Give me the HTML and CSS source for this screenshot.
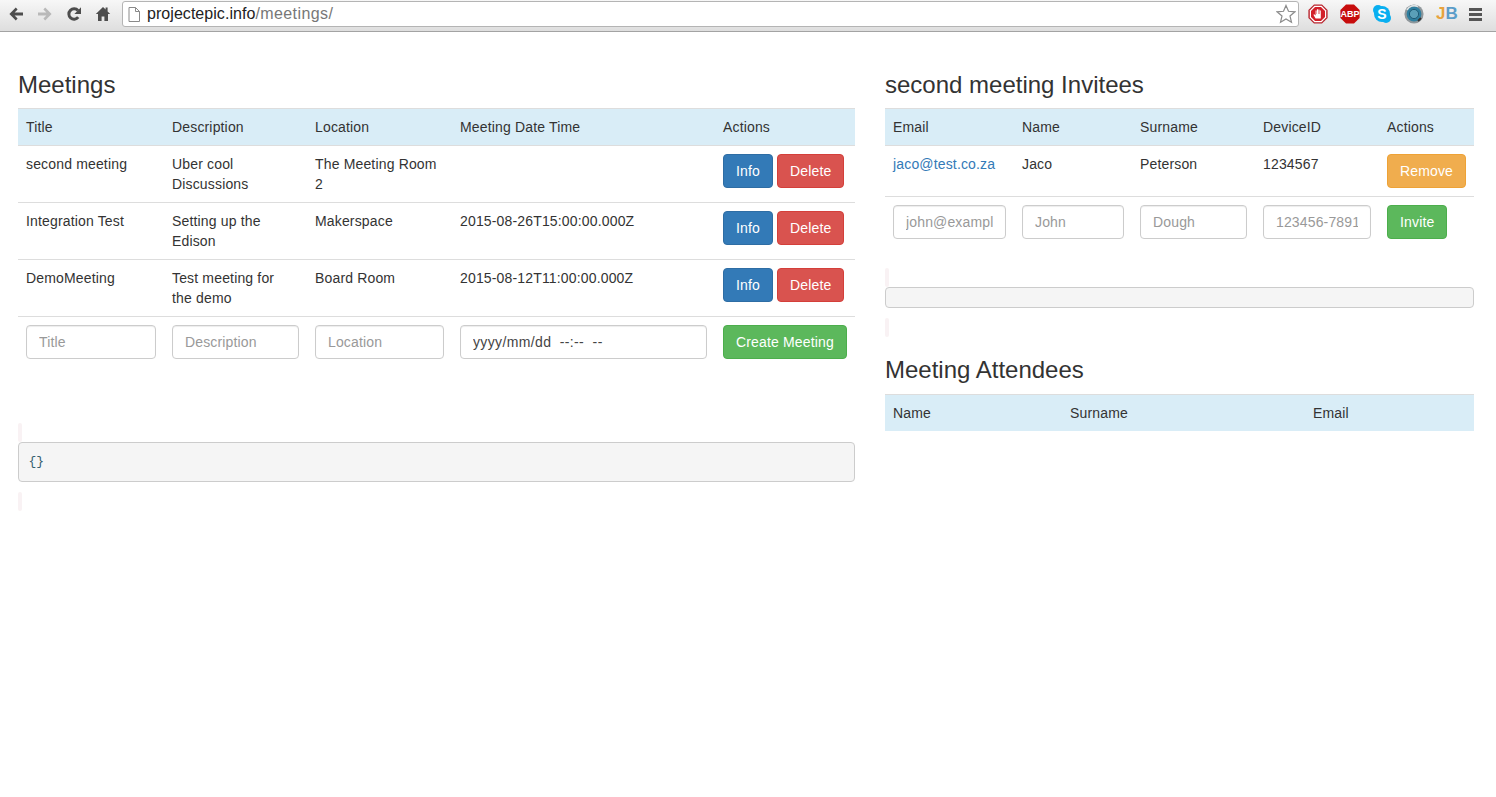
FILE: index.html
```html
<!DOCTYPE html>
<html lang="en">
<head>
    <meta charset="UTF-8">
    <meta name="viewport" content="width=device-width, initial-scale=1.0">
    <title>Meetings</title>
    <link rel="stylesheet" href="styles.css">
</head>
<body>
    <!-- browser toolbar -->
    <div class="toolbar">
        <div class="nav-icons">
            <svg class="nav-icon" viewBox="0 0 18 18"><path d="M16 7.4H7.6L10.6 4.4 8.8 2.6 2.4 9 8.8 15.4 10.6 13.6 7.6 10.6H16z" fill="#4d4d4d"/></svg>
            <svg class="nav-icon" viewBox="0 0 18 18"><path d="M2 7.4H10.4L7.4 4.4 9.2 2.6 15.6 9 9.2 15.4 7.4 13.6 10.4 10.6H2z" fill="#b9b9b9"/></svg>
            <svg class="nav-icon" viewBox="0 0 18 18"><path d="M13.2 12.2A5.2 5.2 0 1 1 13 5.6" fill="none" stroke="#4d4d4d" stroke-width="3"/><path d="M16 2.2V9H9.4z" fill="#4d4d4d"/></svg>
            <svg class="nav-icon" viewBox="0 0 18 18"><path d="M9 2L1.8 9H4V16H7.6V11.4H10.4V16H14V9H16.2L13.6 6.5V2.6H11.6V4.6z" fill="#4d4d4d"/></svg>
        </div>
        <div class="address-bar">
            <svg class="page-icon" viewBox="0 0 12 15"><path d="M1 .5H7.5L11.5 4.5V14.5H1zM7.5 .5V4.5H11.5" fill="#fff" stroke="#8a8a8a"/></svg>
            <span class="host">projectepic.info</span><span class="path">/meetings/</span>
            <svg class="star-icon" viewBox="0 0 20 20"><path d="M10 1.4L12.5 7.3 18.9 7.8 14 12 15.5 18.3 10 15 4.5 18.3 6 12 1.1 7.8 7.5 7.3z" fill="#fff" stroke="#8c8c8c" stroke-width="1.2"/></svg>
        </div>
        <div class="ext-icons">
            <svg class="ext-icon" viewBox="0 0 20 20"><path d="M6 .4H14L19.6 6V14L14 19.6H6L.4 14V6z" fill="#b8222b"/><path d="M6.4 1.8H13.6L18.2 6.4V13.6L13.6 18.2H6.4L1.8 13.6V6.4z" fill="#fff"/><path d="M7 3H13L17 7V13L13 17H7L3 13V7z" fill="#d3202a"/><path d="M7.6 14.6L5.4 10.8 6.2 10.2 7.6 11.4V6.6H8.5V10H8.9V5.2H10V10H10.4V5.4H11.4V10H11.8V6.4H12.8V14.6z" fill="#fff"/></svg>
            <svg class="ext-icon" viewBox="0 0 20 20"><path d="M6 .4H14L19.6 6V14L14 19.6H6L.4 14V6z" fill="#c70d0d"/><text x="10" y="13.4" class="abp-text">ABP</text></svg>
            <svg class="ext-icon" viewBox="0 0 20 20"><circle cx="6" cy="6" r="5" fill="#0aaff0"/><circle cx="14" cy="14" r="5" fill="#0aaff0"/><circle cx="10" cy="10" r="8" fill="#0aaff0"/><text x="10" y="15" class="skype-text">S</text></svg>
            <svg class="ext-icon" viewBox="0 0 20 20"><circle cx="10" cy="10" r="9.6" fill="#8f979b"/><circle cx="10" cy="10" r="7.4" fill="#2f7f9f"/><circle cx="10" cy="10" r="4.6" fill="#5a9fb8" stroke="#1f5a75"/><path d="M3 6A8 8 0 0 1 14 2.6" fill="none" stroke="#dfe5e7" stroke-width="1.6"/><path d="M14 17L17 14" stroke="#333" stroke-width="2"/></svg>
            <div class="jb-icon"><span class="jb-j">J</span><span class="jb-b">B</span></div>
            <div class="menu-icon"><span></span><span></span><span></span></div>
        </div>
    </div>

    <div class="page">
        <div class="left-col">
            <h2>Meetings</h2>
            <table class="data-table">
                <colgroup>
                    <col class="m-title"><col class="m-desc"><col class="m-loc"><col class="m-date"><col>
                </colgroup>
                <thead>
                    <tr class="head-row">
                        <th>Title</th>
                        <th>Description</th>
                        <th>Location</th>
                        <th>Meeting Date Time</th>
                        <th>Actions</th>
                    </tr>
                </thead>
                <tbody>
                    <tr>
                        <td>second meeting</td>
                        <td>Uber cool Discussions</td>
                        <td>The Meeting Room 2</td>
                        <td></td>
                        <td><button class="btn btn-primary">Info</button> <button class="btn btn-danger">Delete</button></td>
                    </tr>
                    <tr>
                        <td>Integration Test</td>
                        <td>Setting up the Edison</td>
                        <td>Makerspace</td>
                        <td>2015-08-26T15:00:00.000Z</td>
                        <td><button class="btn btn-primary">Info</button> <button class="btn btn-danger">Delete</button></td>
                    </tr>
                    <tr>
                        <td>DemoMeeting</td>
                        <td>Test meeting for<br>the demo</td>
                        <td>Board Room</td>
                        <td>2015-08-12T11:00:00.000Z</td>
                        <td><button class="btn btn-primary">Info</button> <button class="btn btn-danger">Delete</button></td>
                    </tr>
                    <tr>
                        <td><input class="form-control" type="text" placeholder="Title"></td>
                        <td><input class="form-control" type="text" placeholder="Description"></td>
                        <td><input class="form-control" type="text" placeholder="Location"></td>
                        <td><input class="form-control date-input" type="text" value="yyyy/mm/dd  --:--  --"></td>
                        <td><button class="btn btn-success">Create Meeting</button></td>
                    </tr>
                </tbody>
            </table>
            <div class="spacer"></div>
            <code class="stripe"></code>
            <pre>{}</pre>
            <code class="stripe"></code>
        </div>

        <div class="right-col">
            <h2>second meeting Invitees</h2>
            <table class="data-table invitees-table">
                <colgroup>
                    <col class="i-email"><col class="i-name"><col class="i-surname"><col class="i-device"><col>
                </colgroup>
                <thead>
                    <tr class="head-row">
                        <th>Email</th>
                        <th>Name</th>
                        <th>Surname</th>
                        <th>DeviceID</th>
                        <th>Actions</th>
                    </tr>
                </thead>
                <tbody>
                    <tr>
                        <td><a href="#">jaco@test.co.za</a></td>
                        <td>Jaco</td>
                        <td>Peterson</td>
                        <td>1234567</td>
                        <td><button class="btn btn-warning">Remove</button></td>
                    </tr>
                    <tr>
                        <td><input class="form-control" type="text" placeholder="john@example.com"></td>
                        <td><input class="form-control" type="text" placeholder="John"></td>
                        <td><input class="form-control" type="text" placeholder="Dough"></td>
                        <td><input class="form-control" type="text" placeholder="123456-7891"></td>
                        <td><button class="btn btn-success">Invite</button></td>
                    </tr>
                </tbody>
            </table>
            <code class="stripe"></code>
            <pre></pre>
            <code class="stripe"></code>

            <h2 class="attendees-title">Meeting Attendees</h2>
            <table class="data-table attendees-table">
                <colgroup>
                    <col class="a-name"><col class="a-surname"><col>
                </colgroup>
                <thead>
                    <tr class="head-row">
                        <th>Name</th>
                        <th>Surname</th>
                        <th>Email</th>
                    </tr>
                </thead>
            </table>
        </div>
    </div>
</body>
</html>
```

FILE: styles.css
```css
* {
    box-sizing: border-box;
}
body {
    font-family: "Liberation Sans", Arial, sans-serif;
    font-size: 14px;
    line-height: 20px;
    color: #333;
    background-color: #fff;
    margin: 0;
}

/* browser toolbar */
.toolbar {
    display: flex;
    align-items: flex-start;
    height: 32px;
    background: linear-gradient(#f7f7f7, #dedede);
    border-bottom: 1px solid #a3a3a3;
    padding-top: 1px;
}
.nav-icons {
    display: flex;
    gap: 11px;
    width: 122px;
    padding: 4px 0 0 7px;
}
.nav-icon {
    width: 18px;
    height: 18px;
}
.address-bar {
    display: flex;
    align-items: center;
    width: 1177px;
    height: 26px;
    background-color: #fff;
    border: 1px solid #b4b4b4;
    border-radius: 3px;
    padding: 0 2px 0 5px;
    font-size: 16px;
}
.page-icon {
    width: 12px;
    height: 15px;
    margin-right: 7px;
}
.host {
    color: #222;
    letter-spacing: 0.05px;
}
.path {
    color: #777;
    letter-spacing: 0.4px;
    flex: 1;
}
.star-icon {
    width: 20px;
    height: 20px;
}
.ext-icons {
    display: flex;
    align-items: center;
    gap: 12px;
    padding: 3px 0 0 9px;
}
.ext-icon {
    width: 20px;
    height: 20px;
}
.abp-text {
    font-family: "Liberation Sans", Arial, sans-serif;
    font-size: 9px;
    font-weight: bold;
    fill: #fff;
    text-anchor: middle;
}
.skype-text {
    font-family: "Liberation Sans", Arial, sans-serif;
    font-size: 14px;
    font-weight: bold;
    fill: #fff;
    text-anchor: middle;
}
.jb-icon {
    width: 20px;
    height: 20px;
    font-size: 17px;
    font-weight: bold;
    line-height: 20px;
    text-align: center;
    white-space: nowrap;
}
.jb-j {
    color: #e8a33d;
}
.jb-b {
    color: #5b9dc9;
}
.menu-icon {
    display: flex;
    flex-direction: column;
    gap: 2px;
    width: 13px;
    margin-left: 1px;
}
.menu-icon span {
    height: 3px;
    background-color: #555;
}

/* page */
.page {
    display: flex;
    gap: 30px;
    padding: 40px 22px 0 18px;
}
.left-col {
    width: 837px;
}
.right-col {
    width: 589px;
}
h2 {
    font-size: 24px;
    font-weight: 500;
    line-height: 26.4px;
    margin: 0 0 10px;
}
.attendees-title {
    margin-top: 20px;
}
.data-table {
    width: 100%;
    table-layout: fixed;
    border-collapse: collapse;
    margin-bottom: 20px;
    letter-spacing: 0.16px;
}
.invitees-table {
    margin-bottom: 21px;
}
.data-table th,
.data-table td {
    padding: 8px;
    text-align: left;
    vertical-align: top;
    font-weight: normal;
    border-top: 1px solid #ddd;
}
.head-row th {
    background-color: #d9edf7;
    border-bottom: 1px solid #ddd;
}
.attendees-table .head-row th {
    border-bottom: none;
}
.m-title { width: 146px; }
.m-desc { width: 143px; }
.m-loc { width: 145px; }
.m-date { width: 263px; }
.i-email { width: 129px; }
.i-name { width: 118px; }
.i-surname { width: 123px; }
.i-device { width: 124px; }
.a-name { width: 177px; }
.a-surname { width: 243px; }
a {
    color: #337ab7;
    text-decoration: none;
}
.form-control {
    display: block;
    width: 100%;
    height: 34px;
    padding: 6px 12px;
    font-family: inherit;
    font-size: 14px;
    letter-spacing: 0.15px;
    color: #555;
    background-color: #fff;
    border: 1px solid #ccc;
    border-radius: 4px;
    box-shadow: inset 0 1px 1px rgba(0, 0, 0, 0.075);
}
.form-control::placeholder {
    color: #999;
}
.date-input {
    letter-spacing: 0.36px;
    color: #444;
}
.btn {
    display: inline-block;
    padding: 6px 12px;
    font-family: inherit;
    font-size: 14px;
    line-height: 20px;
    letter-spacing: 0.15px;
    white-space: nowrap;
    color: #fff;
    border: 1px solid transparent;
    border-radius: 4px;
    cursor: pointer;
}
.btn-primary {
    background-color: #337ab7;
    border-color: #2e6da4;
}
.btn-danger {
    background-color: #d9534f;
    border-color: #d43f3a;
}
.btn-success {
    background-color: #5cb85c;
    border-color: #4cae4c;
}
.btn-warning {
    background-color: #f0ad4e;
    border-color: #eea236;
}
.spacer {
    height: 36px;
}
.stripe {
    display: block;
    width: 4px;
    height: 19px;
    background-color: #f9f2f4;
    border-radius: 4px;
}
pre {
    font-family: "Liberation Mono", monospace;
    font-size: 13px;
    line-height: 18.57px;
    color: #35606f;
    background-color: #f5f5f5;
    border: 1px solid #ccc;
    border-radius: 4px;
    padding: 9.5px;
    margin: 0 0 10px;
}
```
